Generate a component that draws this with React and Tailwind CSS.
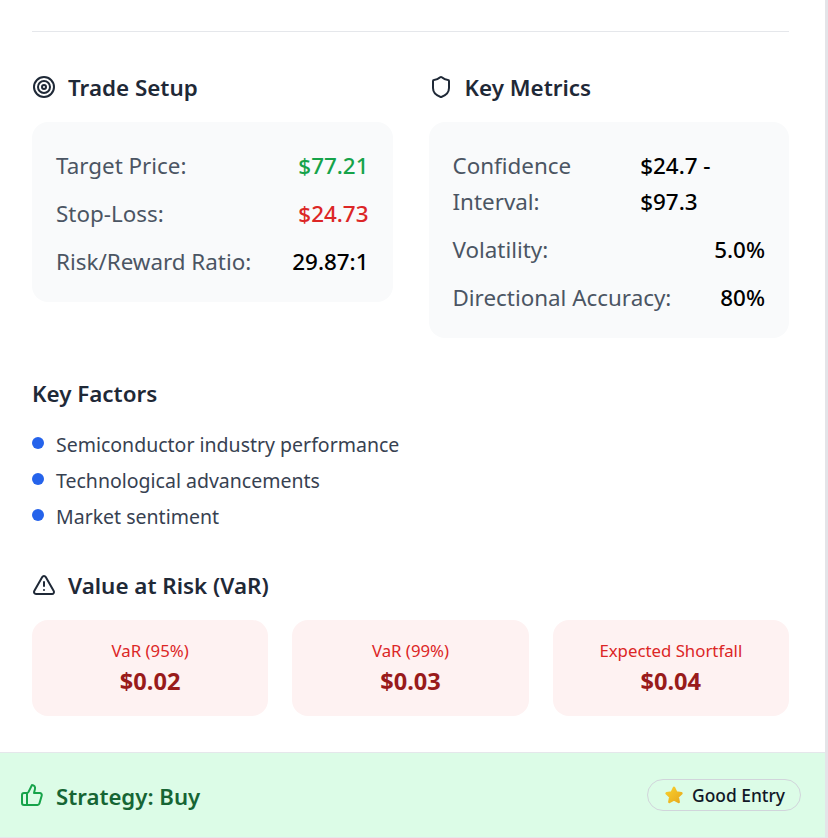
import { Target, Shield, TriangleAlert, ThumbsUp } from 'lucide-react';

const Row = ({ label, value, color = 'text-black' }) => (
    <div className="flex justify-between gap-4 text-[22.4px] leading-9">
        <span className="text-[#4b5563]">{label}</span>
        <span className={`font-medium ${color}`}>{value}</span>
    </div>
);

const SectionTitle = ({ icon: Icon, children }) => (
    <h3 className="flex items-center gap-3 text-[22.4px] leading-8 font-semibold text-[#1f2937]">
        <Icon size={24} strokeWidth={2} className="-mt-0.5" />
        {children}
    </h3>
);

const VarCard = ({ label, value }) => (
    <div className="flex h-24 flex-col items-center justify-center rounded-2xl bg-[#fef2f2] pb-0.5">
        <span className="text-[16.8px] leading-7 text-[#dc2626]">{label}</span>
        <span className="text-[23.6px] leading-8 font-bold text-[#991b1b]">{value}</span>
    </div>
);

const App = () => {
    return (
        <div className="h-[838px] w-[828px] overflow-hidden bg-[#e4e4e8] font-['Noto_Sans',sans-serif]">
            <div className="h-full w-[825px] bg-white">
                <div className="h-[752px] pt-[31px] pr-9 pl-8">
                    <div className="border-t border-[#e5e7eb] pt-10">
                        <div className="grid grid-cols-2 items-start gap-9">
                            <div>
                                <SectionTitle icon={Target}>Trade Setup</SectionTitle>
                                <div className="mt-[18px] flex flex-col gap-3 rounded-2xl bg-[#f9fafb] px-6 pt-[26px] pb-[22px]">
                                    <Row label="Target Price:" value="$77.21" color="text-[#16a34a]" />
                                    <Row label="Stop-Loss:" value="$24.73" color="text-[#dc2626]" />
                                    <Row label="Risk/Reward Ratio:" value="29.87:1" />
                                </div>
                            </div>
                            <div>
                                <SectionTitle icon={Shield}>Key Metrics</SectionTitle>
                                <div className="mt-[18px] flex flex-col gap-3 rounded-2xl bg-[#f9fafb] px-6 pt-[26px] pb-[22px]">
                                    <div className="flex justify-between gap-4 text-[22.4px] leading-9">
                                        <span className="w-[172px] text-[#4b5563]">Confidence Interval:</span>
                                        <span className="w-[125px] font-medium text-black">$24.7 - $97.3</span>
                                    </div>
                                    <Row label="Volatility:" value="5.0%" />
                                    <Row label="Directional Accuracy:" value="80%" />
                                </div>
                            </div>
                        </div>

                        <h3 className="mt-10 text-[22.4px] leading-8 font-semibold text-[#1f2937]">Key Factors</h3>
                        <ul className="mt-[17px] flex flex-col text-[19.5px] leading-9 text-[#374151]">
                            {['Semiconductor industry performance', 'Technological advancements', 'Market sentiment'].map((item) => (
                                <li key={item} className="flex items-center gap-3">
                                    <span className="-mt-1 size-3 rounded-full bg-[#2563eb]" />
                                    {item}
                                </li>
                            ))}
                        </ul>

                        <div className="mt-[35px]">
                            <SectionTitle icon={TriangleAlert}>Value at Risk (VaR)</SectionTitle>
                        </div>
                        <div className="mt-[18px] grid grid-cols-3 gap-6">
                            <VarCard label="VaR (95%)" value="$0.02" />
                            <VarCard label="VaR (99%)" value="$0.03" />
                            <VarCard label="Expected Shortfall" value="$0.04" />
                        </div>
                    </div>
                </div>

                <div className="flex h-[86px] items-center justify-between border-y border-[#e5e7eb] bg-[#dcfce7] pr-6 pl-5">
                    <div className="flex items-center gap-3 pt-1 text-[22.2px] font-semibold text-[#166534]">
                        <ThumbsUp size={24} strokeWidth={2} className="-mt-1 text-[#16a34a]" />
                        Strategy: Buy
                    </div>
                    <div className="flex h-8 items-center gap-2 rounded-full border border-[#d1d5db] pr-[15px] pl-4 text-[17.4px] font-medium text-[#111827]">
                        <svg width="20" height="20" viewBox="0 0 24 24">
                            <defs>
                                <linearGradient id="star" x1="0" y1="0" x2="1" y2="1">
                                    <stop offset="0" stopColor="#f8cf2e" />
                                    <stop offset="1" stopColor="#e8a91c" />
                                </linearGradient>
                            </defs>
                            <path
                                d="M12 3.5l2.7 5.6 6.2.8-4.5 4.3 1.2 6.1L12 17.3l-5.6 3 1.2-6.1-4.5-4.3 6.2-.8z"
                                fill="url(#star)"
                                stroke="url(#star)"
                                strokeWidth="3"
                                strokeLinejoin="round"
                            />
                        </svg>
                        Good Entry
                    </div>
                </div>
            </div>
        </div>
    );
};

export default App;
